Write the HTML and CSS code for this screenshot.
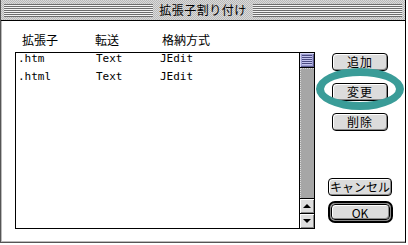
FILE: index.html
```html
<!DOCTYPE html>
<html lang="ja">
<head>
    <meta charset="UTF-8">
    <meta name="viewport" content="width=device-width, initial-scale=1.0">
    <title>拡張子割り付け</title>
    <link rel="stylesheet" href="styles.css">
</head>
<body>
    <div class="window">
        <div class="titlebar">
            <div class="stripes"></div>
            <span class="title">拡張子割り付け</span>
            <div class="stripes"></div>
        </div>

        <div class="body">
            <div class="list-col">
                <div class="list-head">
                    <span>拡張子</span>
                    <span>転送</span>
                    <span>格納方式</span>
                </div>

                <div class="list-box">
                    <div class="rows">
                        <div class="row"><span>.htm</span><span>Text</span><span>JEdit</span></div>
                        <div class="row"><span>.html</span><span>Text</span><span>JEdit</span></div>
                    </div>
                    <div class="scrollbar">
                        <div class="thumb"><div class="grip"></div></div>
                        <div class="track"></div>
                        <div class="arrow">
                            <svg width="14" height="14" viewBox="0 0 14 14"><polygon points="3,9 11,9 7,5" fill="#000"/></svg>
                        </div>
                        <div class="arrow">
                            <svg width="14" height="14" viewBox="0 0 14 14"><polygon points="3,5 11,5 7,9" fill="#000"/></svg>
                        </div>
                    </div>
                </div>
            </div>

            <div class="btn-col">
                <div class="btn-group">
                    <button class="btn">追加</button>
                    <button class="btn">変更</button>
                    <button class="btn">削除</button>
                </div>
                <div class="btn-group bottom">
                    <button class="btn wide">キャンセル</button>
                    <div class="default-ring">
                        <button class="btn ok">OK</button>
                    </div>
                </div>
            </div>
        </div>

        <!-- annotation ring drawn over the 変更 button -->
        <div class="highlight"></div>
    </div>
</body>
</html>
```

FILE: styles.css
```css
* {
    margin: 0;
    padding: 0;
    box-sizing: border-box;
}

body {
    background: #fff;
    font-family: "Noto Sans CJK JP", "DejaVu Sans", sans-serif;
    font-size: 12px;
    color: #000;
}

.window {
    position: relative;
    width: 406px;
    height: 243px;
    display: flex;
    flex-direction: column;
    background: #fff;
    border-left: 1px solid #555;
    border-right: 1px solid #000;
    border-bottom: 1px solid #555;
    box-shadow: inset 1px -1px 0 #bbb;
}

.titlebar {
    height: 21px;
    display: flex;
    align-items: center;
    gap: 6px;
    padding: 0 3px;
    border-bottom: 1px solid #000;
    background-color: #cdcdcd;
    background-image: repeating-conic-gradient(#b9b9b9 0 25%, #dadada 0 50%);
    background-size: 2px 2px;
}

.stripes {
    flex: 1;
    height: 13px;
    background: repeating-linear-gradient(to bottom, #6e6e6e 0 1px, #f4f4f4 1px 2px);
}

.title {
    line-height: 20px;
    letter-spacing: 0.5px;
}

.body {
    flex: 1;
    display: flex;
    gap: 10px;
    padding: 11px 0 0 14px;
}

.list-col {
    width: 300px;
    display: flex;
    flex-direction: column;
}

.list-head {
    display: grid;
    grid-template-columns: 73px 67px auto;
    padding-left: 7px;
    line-height: 16px;
    height: 16px;
    margin-bottom: 4px;
}

.list-box {
    height: 177px;
    display: flex;
    border: 1px solid #000;
}

.rows {
    flex: 1;
    padding-left: 2px;
    font-family: "DejaVu Sans Mono", "Liberation Mono", monospace;
    font-size: 11px;
}

.row {
    display: grid;
    grid-template-columns: 78px 64px auto;
    line-height: 11px;
    padding-bottom: 7px;
}

.scrollbar {
    width: 15px;
    display: flex;
    flex-direction: column;
    border-left: 1px solid #000;
}

.thumb {
    height: 15px;
    padding: 2px 2px;
    background: #9c9cd0;
    border-bottom: 1px solid #000;
    box-shadow: inset 1px 1px 0 #d6d6f4, inset -1px -1px 0 #5c5c90;
}

.grip {
    height: 100%;
    background: repeating-linear-gradient(to bottom, #4a4a80 0 1px, #c4c4ee 1px 2px);
}

.track {
    flex: 1;
    background: #a6a6a6;
    border-left: 1px dotted #dcdcdc;
    border-top: 1px dotted #dcdcdc;
}

.arrow {
    height: 15px;
    border-top: 1px solid #000;
    background: #dedede;
    box-shadow: inset 1px 1px 0 #fff, inset -1px -1px 0 #888;
    display: flex;
}

.btn-col {
    width: 70px;
    display: flex;
    flex-direction: column;
    align-items: center;
    padding-top: 21px;
}

.btn-group {
    display: flex;
    flex-direction: column;
    align-items: center;
    gap: 12px;
}

.btn-group.bottom {
    margin-top: 47px;
    gap: 5px;
}

.btn {
    width: 56px;
    height: 18px;
    font-family: inherit;
    font-size: 12px;
    line-height: 16px;
    color: #000;
    background: #dcdcdc;
    border: 1px solid #000;
    border-radius: 4px;
    box-shadow: inset 1px 1px 0 #fff, inset -1px -1px 0 #8a8a8a;
    letter-spacing: 1px;
}

.btn.wide {
    width: 64px;
    letter-spacing: 0;
}

.default-ring {
    width: 65px;
    height: 22px;
    padding: 1px;
    border: 2px solid #000;
    border-radius: 7px;
    box-shadow: inset 0 0 0 1px #8a8a8a;
    display: flex;
}

.btn.ok {
    width: 100%;
    height: 100%;
    letter-spacing: 0;
}

.highlight {
    position: absolute;
    left: 315px;
    top: 68px;
    width: 88px;
    height: 42px;
    border: 8px solid #3a9c98;
    border-radius: 50%;
}
```
